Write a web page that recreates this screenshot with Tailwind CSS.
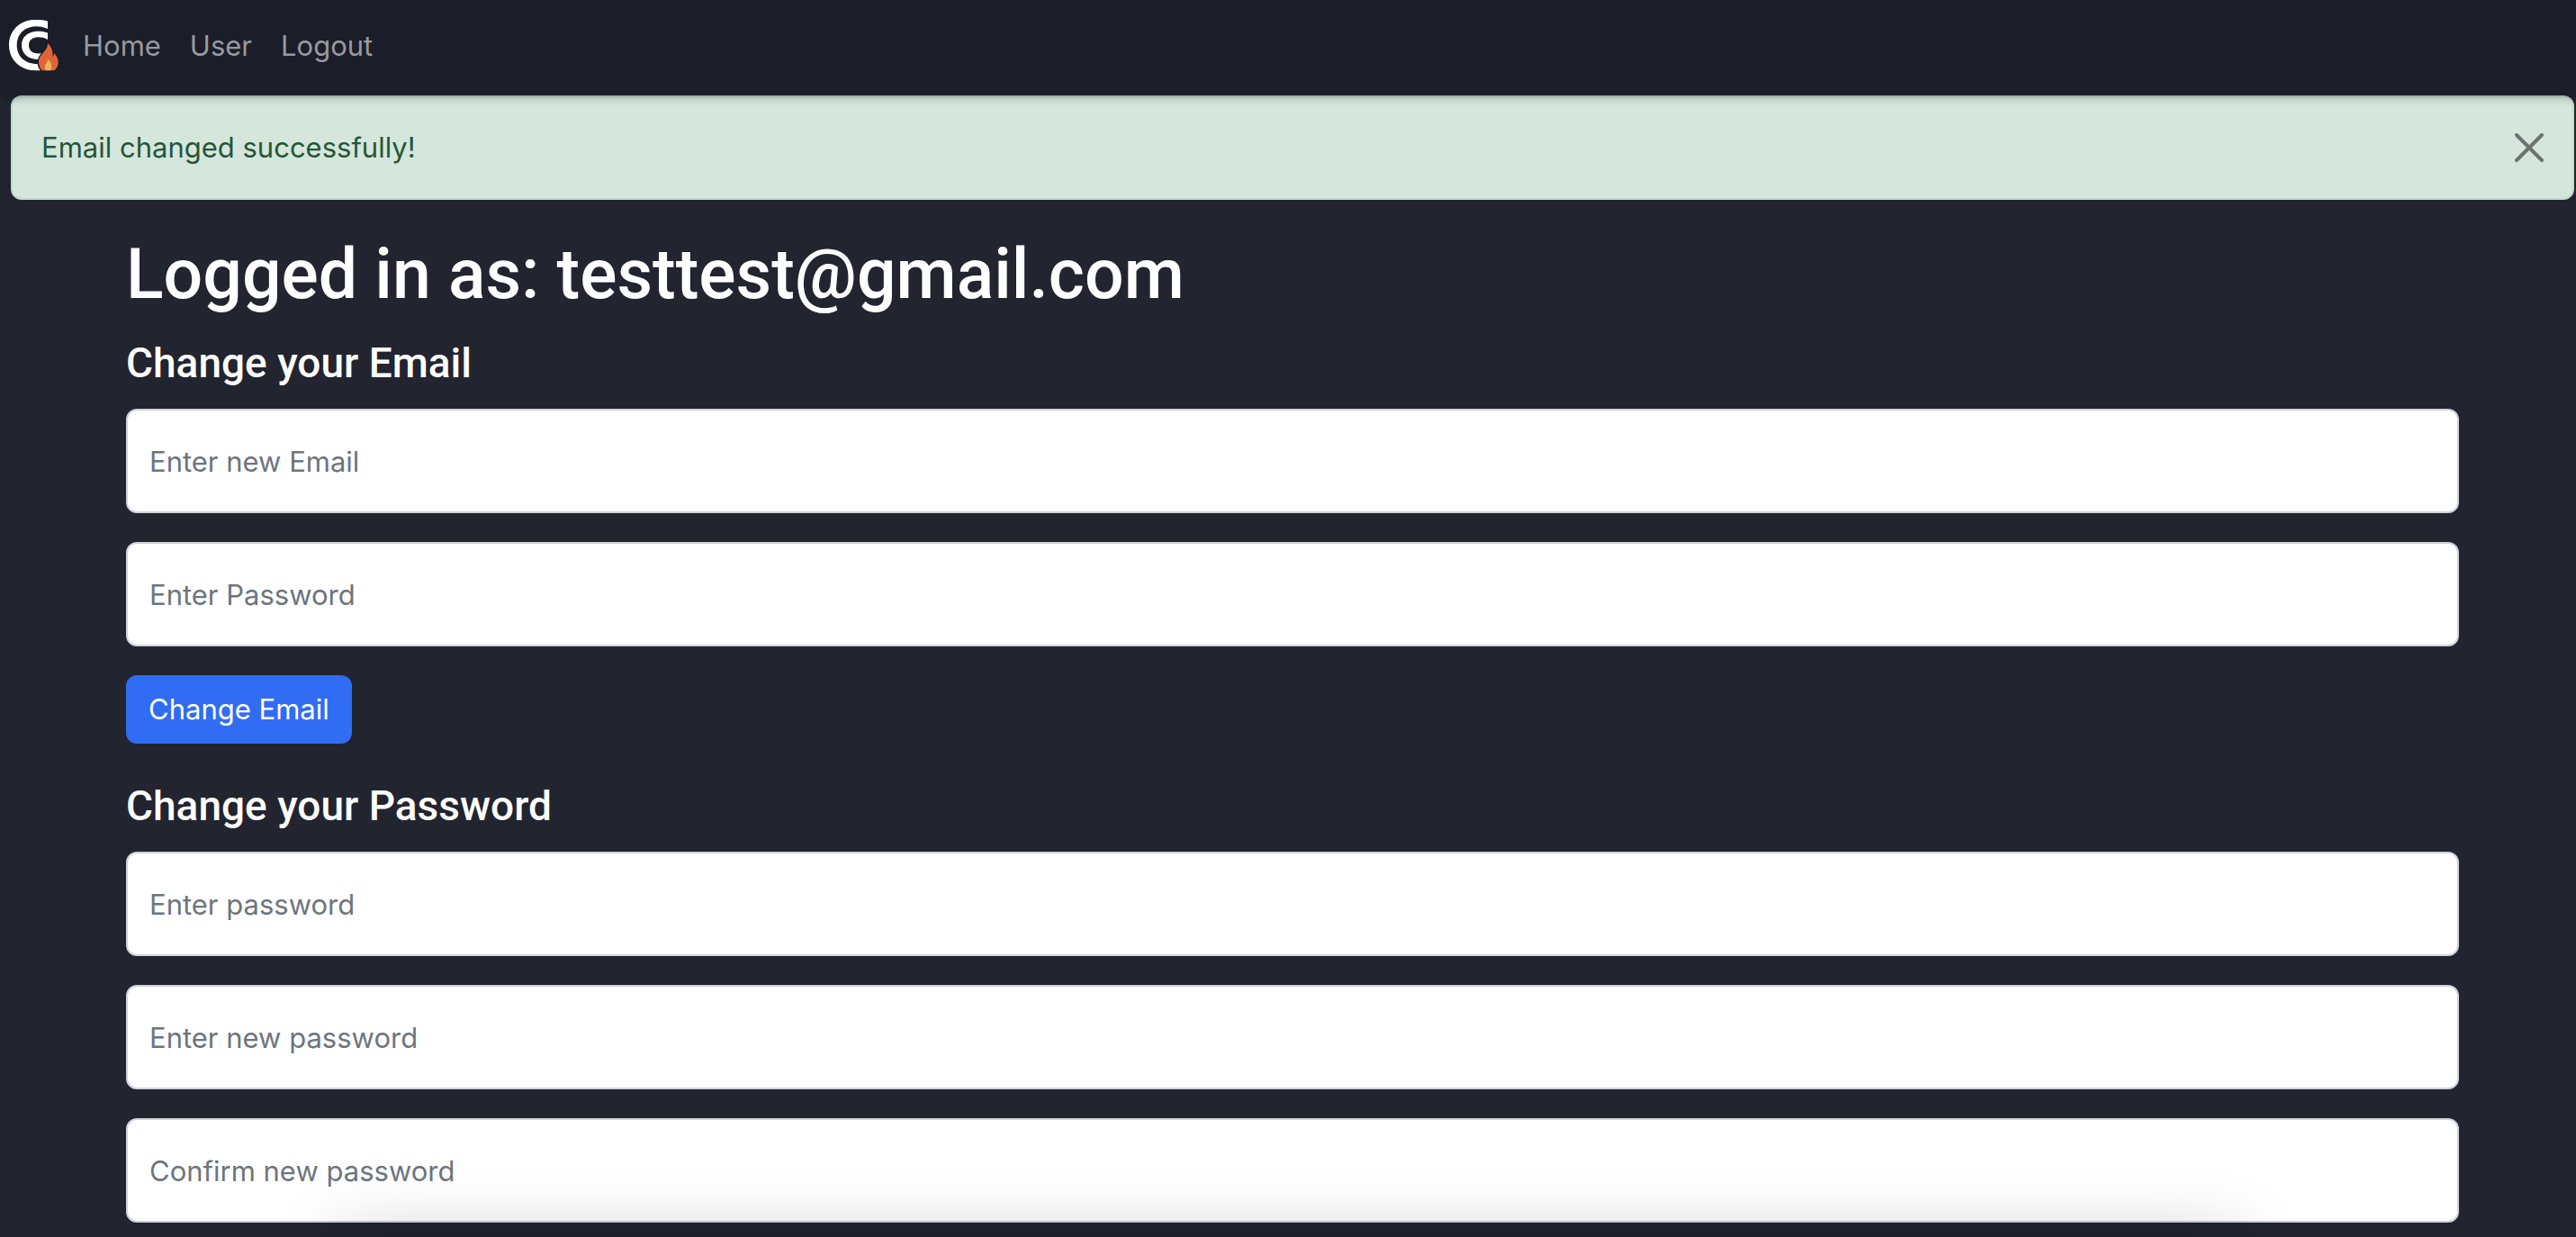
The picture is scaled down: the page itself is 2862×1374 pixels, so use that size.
<!DOCTYPE html>
<html lang="en">
<head>
<meta charset="utf-8">
<meta name="viewport" content="width=device-width, initial-scale=1">
<title>User settings</title>
<script src="https://cdn.jsdelivr.net/npm/@tailwindcss/browser@4"></script>
</head>
<body class="min-h-screen overflow-x-hidden bg-[#22242f] font-['Inter',sans-serif] text-[31px] leading-[48px] text-white">
  <nav class="relative z-10 flex h-[106px] items-center gap-8 bg-[#1b1d29] pb-1 pl-2.5 text-[#98999e] shadow-[0_2px_10px_rgba(0,0,0,0.3)]">
    <a href="#" aria-label="Dashboard" class="-mr-1.5">
      <svg class="h-[58px] w-14" viewBox="10 22 56 58" aria-hidden="true">
        <path fill="#fff" d="M53 23.5C48 22 43 21.8 39 21.8C22 22 10 34 10 50C10 66 22 78 39 78.3H48V71H41.5C27 71 18.700 62 18.700 50C18.700 38 27 29.500 40 29.300C44 29.300 48 30 53 32Z"/>
        <path fill="#fff" d="M53 36.500C49 35 46 34.700 42 34.700C31 35 24 41 24 50C24 59.500 31 66 43 66L48 59C36 61 32 56 32 50C32 45 36 41.300 42 41.300C46 41.300 50 42 53 44Z"/>
        <path fill="#e0643a" stroke="#1b1d29" stroke-width="3" paint-order="stroke" d="M53 48C57 52 59 56 58.500 63C59.500 62 60 61 60 59C63 62 64.700 65 64.700 69C64.700 73 63 76 60.500 78.300H47C44.500 76 43 73 43 69C43 64 46 61 49 57.500C51.500 54.500 53 52 53 48Z"/>
        <path fill="#efb458" d="M53.500 65C56 69 57.500 71 57.300 74C57.200 76 57 77 56 78.300H51C50 77 49.800 76 49.900 74C50 71 53 69 53.500 65Z"/>
      </svg>
    </a>
    <a href="#">Home</a>
    <a href="#">User</a>
    <a href="#">Logout</a>
  </nav>

  <div role="alert" class="mr-0.5 ml-3 flex h-[116px] items-center justify-between rounded-xl border-2 border-[#bfdacc] bg-[#d5e6dd] px-8 text-[#265637]">
    <span>Email changed successfully!</span>
    <button type="button" aria-label="Close" class="text-[#6b7370]">
      <svg class="size-8" viewBox="0 0 32 32" fill="none" stroke="currentColor" stroke-width="4" stroke-linecap="round" aria-hidden="true"><path d="M2 2L30 30M30 2L2 30"/></svg>
    </button>
  </div>

  <main class="mr-[130px] ml-[140px] pt-8 pb-4">
    <h1 class="font-['Roboto',sans-serif] text-[77px] leading-[102px] font-medium">Logged in as: testtest@gmail.com</h1>

    <form class="mt-[18px] flex flex-col items-start gap-8">
      <h2 class="-mb-2.5 font-['Roboto',sans-serif] text-[46px] leading-[58px] font-medium">Change your Email</h2>
      <input type="email" aria-label="New email" placeholder="Enter new Email" class="h-[116px] w-full rounded-xl border-2 border-[#ced3da] bg-white px-6 text-gray-900 placeholder:text-[#6d757d]">
      <input type="password" aria-label="Password" placeholder="Enter Password" class="h-[116px] w-full rounded-xl border-2 border-[#ced3da] bg-white px-6 text-gray-900 placeholder:text-[#6d757d]">
      <button type="submit" class="h-[76px] rounded-xl bg-[#316cf4] px-[25px]">Change Email</button>
    </form>

    <form class="mt-10 flex flex-col items-start gap-8">
      <h2 class="-mb-2.5 font-['Roboto',sans-serif] text-[46px] leading-[58px] font-medium">Change your Password</h2>
      <input type="password" aria-label="Current password" placeholder="Enter password" class="h-[116px] w-full rounded-xl border-2 border-[#ced3da] bg-white px-6 text-gray-900 placeholder:text-[#6d757d]">
      <input type="password" aria-label="New password" placeholder="Enter new password" class="h-[116px] w-full rounded-xl border-2 border-[#ced3da] bg-white px-6 text-gray-900 placeholder:text-[#6d757d]">
      <input type="password" aria-label="Confirm new password" placeholder="Confirm new password" class="h-[116px] w-full rounded-xl border-2 border-[#ced3da] bg-white px-6 text-gray-900 placeholder:text-[#6d757d]">
    </form>
  </main>

  <div class="pointer-events-none fixed inset-x-[13%] top-full h-24 shadow-[0_0_80px_rgba(0,0,0,0.2)]"></div>
</body>
</html>
